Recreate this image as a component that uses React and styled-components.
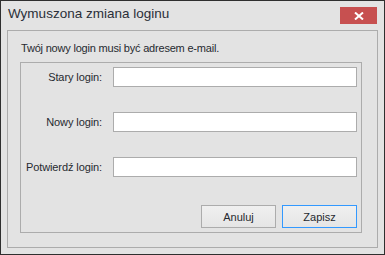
import styled, { createGlobalStyle } from "styled-components";

const GlobalStyle = createGlobalStyle`
  html, body {
    margin: 0;
    padding: 0;
    background: #e3e3e3;
  }
  * {
    box-sizing: border-box;
  }
`;

const Window = styled.div`
  width: 385px;
  height: 255px;
  border: 1px solid #2f2f2f;
  background: #e3e3e3;
  display: flex;
  flex-direction: column;
  font-family: "Liberation Sans", Arial, sans-serif;
  color: #262a30;
`;

const TitleBar = styled.div`
  height: 29px;
  display: flex;
  align-items: flex-start;
  justify-content: space-between;
  padding: 0 7px 0 7px;
`;

const Title = styled.div`
  font-size: 13.5px;
  line-height: 15px;
  margin-top: 5px;
  color: #2a2f38;
`;

const CloseButton = styled.div`
  width: 37px;
  height: 17px;
  margin-top: 6px;
  background: #c75050;
  display: flex;
  align-items: center;
  justify-content: center;
`;

const Panel = styled.div`
  flex: 1;
  margin: 0 6px 6px 6px;
  border: 1px solid #acacac;
  padding: 0 15px 14px 12px;
  display: flex;
  flex-direction: column;
`;

const Hint = styled.div`
  font-size: 11px;
  letter-spacing: -0.2px;
  line-height: 14px;
  margin: 10px 0 0 1px;
  height: 21px;
`;

const Group = styled.div`
  flex: 1;
  border: 1px solid #acacac;
  padding: 4px 4px 4px 0;
  display: flex;
  flex-direction: column;
  gap: 25px;
`;

const Row = styled.div`
  display: grid;
  grid-template-columns: 81px 1fr;
  column-gap: 11px;
  align-items: center;
`;

const Label = styled.label`
  font-size: 11px;
  letter-spacing: -0.1px;
  text-align: right;
  white-space: nowrap;
`;

const Input = styled.input`
  height: 20px;
  border: 1px solid #acacac;
  background: #fff;
  outline: none;
  margin: 0;
  padding: 0 3px;
`;

const Buttons = styled.div`
  margin-top: auto;
  display: flex;
  justify-content: flex-end;
  gap: 6px;
`;

const Button = styled.button`
  width: 75px;
  height: 23px;
  margin: 0;
  padding: 0;
  border: 1px solid ${(p) => (p.$primary ? "#3399ff" : "#acacac")};
  background: linear-gradient(#f0f0f0, #e5e5e5);
  font-family: "Liberation Sans", Arial, sans-serif;
  font-size: 11px;
  color: #262a30;
`;

const fields = ["Stary login:", "Nowy login:", "Potwierdź login:"];

const App = () => {
  return (
    <>
      <GlobalStyle />
      <Window>
        <TitleBar>
          <Title>Wymuszona zmiana loginu</Title>
          <CloseButton>
            <svg width="10" height="8" viewBox="0 0 10 8">
              <path
                d="M1 0.5 L9 7.5 M9 0.5 L1 7.5"
                stroke="#fff"
                strokeWidth="2"
                fill="none"
              />
            </svg>
          </CloseButton>
        </TitleBar>
        <Panel>
          <Hint>Twój nowy login musi być adresem e-mail.</Hint>
          <Group>
            {fields.map((f) => (
              <Row key={f}>
                <Label>{f}</Label>
                <Input type="text" />
              </Row>
            ))}
            <Buttons>
              <Button>Anuluj</Button>
              <Button $primary>Zapisz</Button>
            </Buttons>
          </Group>
        </Panel>
      </Window>
    </>
  );
};

export default App;
